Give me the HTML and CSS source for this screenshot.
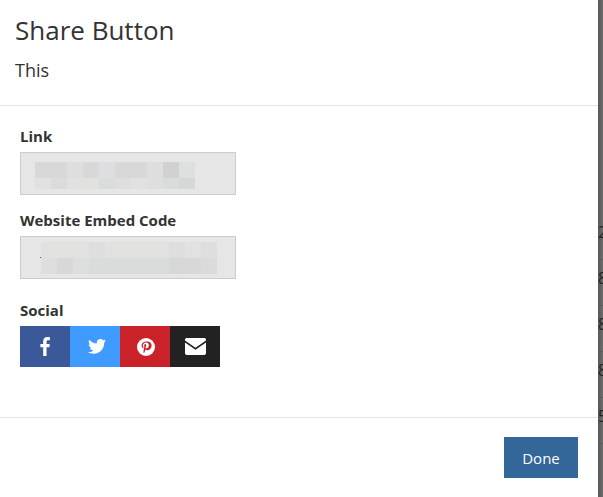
FILE: index.html
```html
<!DOCTYPE html>
<html lang="en">
<head>
<meta charset="utf-8">
<title>Share Button</title>
<link rel="stylesheet" href="styles.css">
</head>
<body>
<main class="modal">
  <header class="modal-header">
    <h1 class="modal-title">Share Button</h1>
    <p class="modal-sub">This</p>
  </header>
  <section class="modal-body">
    <div class="field">
      <label class="field-label">Link</label>
      <div class="blur-input blur-link">
        <i class="a"></i><i class="a"></i><i class="b"></i><i class="a"></i><i class="d"></i><i class="a"></i><i class="a"></i><i class="b"></i><i class="e"></i><i class="g"></i>
        <i class="f"></i><i class="h"></i><i class="f"></i><i class="f"></i><i class="h"></i><i class="b"></i><i class="f"></i><i class="b"></i><i class="h"></i><i class="c"></i>
      </div>
    </div>
    <div class="field">
      <label class="field-label">Website Embed Code</label>
      <div class="blur-input blur-embed">
        <span class="dot"></span>
        <i class="f"></i><i class="f"></i><i class="f"></i><i class="b"></i><i class="f"></i><i class="f"></i><i class="f"></i><i class="f"></i><i class="b"></i><i class="f"></i><i class="b"></i>
        <i class="b"></i><i class="a"></i><i class="d"></i><i class="h"></i><i class="h"></i><i class="h"></i><i class="h"></i><i class="h"></i><i class="c"></i><i class="a"></i><i class="h"></i>
      </div>
    </div>
    <div class="field social-field">
      <label class="field-label">Social</label>
      <div class="social">
        <a class="social-btn fb"><svg width="10" height="19" viewBox="0 0 11 21"><path fill="#fff" d="M7.2 21V11.400h3.100l.5-3.700H7.200V5.300c0-1.100.3-1.800 1.800-1.800h1.900V.2C10.600.1 9.500 0 8.200 0 5.400 0 3.500 1.700 3.500 4.800v2.900H.4v3.700h3.100V21z"/></svg></a>
        <a class="social-btn tw"><svg width="18" height="15" viewBox="0 0 24 20"><path fill="#fff" d="M24 2.400c-.9.400-1.800.700-2.800.800 1-.6 1.800-1.600 2.200-2.700-1 .6-2 1-3.100 1.200C19.300.7 18 0 16.600 0c-2.700 0-4.900 2.200-4.900 4.900 0 .4 0 .8.100 1.100C7.700 5.800 4.100 3.900 1.700.9c-.4.700-.7 1.600-.7 2.500 0 1.700.9 3.200 2.200 4.100-.8 0-1.600-.2-2.200-.6v.1c0 2.400 1.700 4.400 3.900 4.800-.4.100-.8.200-1.300.2-.3 0-.6 0-.9-.1.600 2 2.400 3.400 4.600 3.400-1.700 1.300-3.800 2.100-6.100 2.100-.4 0-.8 0-1.200-.1C2.200 18.700 4.800 19.500 7.500 19.500c9.100 0 14-7.500 14-14v-.6c1-.7 1.800-1.600 2.500-2.500z"/></svg></a>
        <a class="social-btn pi"><svg width="18" height="18" viewBox="0 0 18 18"><circle cx="9" cy="9" r="9" fill="#fff"/><path fill="#c92228" d="M9.200 3.500c-3 0-4.600 2-4.600 4.100 0 1 .5 2.300 1.400 2.700.2.100.2 0 .3-.2l.2-.7c0-.1 0-.2-.1-.3-.3-.4-.5-.9-.5-1.500 0-1.600 1.200-3 3.100-3 1.700 0 2.800 1.100 2.800 2.700 0 1.800-.9 3.100-2.100 3.100-.7 0-1.100-.5-1-1.200.2-.8.500-1.600.5-2.200 0-.5-.3-.9-.8-.9-.7 0-1.200.7-1.200 1.600 0 .6.200 1 .2 1l-.8 3.400c-.2.800 0 2 0 2.900l.7-.3c.2-.4.600-1.400.9-2.200l.3-1.300c.3.500 1.100 1 1.900 1 2.500 0 4.200-2.200 4.200-5 0-2.200-1.900-3.700-4.400-3.700z"/></svg></a>
        <a class="social-btn em"><svg width="21" height="17" viewBox="0 0 20 16"><path fill="#fff" d="M1.500 0h17C19.300 0 20 .7 20 1.500v.8l-10 6.900L0 2.300v-.8C0 .7.700 0 1.500 0z"/><path fill="#fff" d="M0 4.200l10 6.900 10-6.900v10.300c0 .8-.7 1.500-1.500 1.500h-17C.7 16 0 15.300 0 14.500z"/></svg></a>
      </div>
    </div>
  </section>
  <footer class="modal-footer">
    <button class="done-btn">Done</button>
  </footer>
</main>
<aside class="backdrop">
  <div class="bd-row">2</div>
  <div class="bd-row">8</div>
  <div class="bd-row">8</div>
  <div class="bd-row">8</div>
  <div class="bd-row">5</div>
</aside>
</body>
</html>
```
FILE: styles.css
```css
* { box-sizing: border-box; }
html, body { margin: 0; height: 100%; overflow: hidden; }
body {
  display: flex;
  width: 603px;
  height: 497px;
  font-family: "Open Sans", "Liberation Sans", sans-serif;
  color: #333;
  background: #666;
}
.modal {
  flex: 0 0 598px;
  background: #fff;
  display: flex;
  flex-direction: column;
}
.modal-header {
  height: 106px;
  padding: 12px 15px 0;
  border-bottom: 1px solid #e5e5e5;
}
.modal-title {
  margin: 0;
  font-size: 26px;
  font-weight: 400;
  line-height: 36px;
}
.modal-sub {
  margin: 10px 0 0;
  font-size: 18px;
  line-height: 25px;
}
.modal-body {
  height: 311px;
  padding: 20px 20px 0;
}
.field { margin-bottom: 15px; }
.field-label {
  display: block;
  font-size: 15px;
  font-weight: 700;
  line-height: 21px;
  margin-bottom: 5px;
}
.blur-input {
  position: relative;
  width: 216px;
  height: 43px;
  background: #e6e6e6;
  border: 1px solid #ccc;
  display: grid;
}
.blur-input i { display: block; }
.blur-link {
  grid-template-columns: repeat(10, 16px);
  grid-template-rows: 16px 11px;
  padding: 9px 0 0 14px;
}
.blur-embed {
  grid-template-columns: repeat(11, 16px);
  grid-template-rows: 16px 16px;
  padding: 5px 0 0 20px;
}
.dot {
  position: absolute;
  left: 19px;
  top: 20px;
  width: 1px;
  height: 1px;
  background: #555;
}
.a { background: #d8d8d8; }
.b { background: #dedede; }
.c { background: #d6d8d8; }
.d { background: #dcdee0; }
.e { background: #d0d2d0; }
.f { background: #e1e1df; }
.g { background: #dde0e0; }
.h { background: #dadcdb; }
.social-field { margin-top: 21px; }
.social { display: flex; }
.social-btn {
  width: 50px;
  height: 41px;
  display: flex;
  align-items: center;
  justify-content: center;
}
.fb { background: #3b5998; }
.tw { background: #3f9bff; padding-left: 4px; }
.pi { background: #c92228; padding-left: 2px; }
.em { background: #222; padding-left: 1px; }
.modal-footer {
  flex: 1;
  border-top: 1px solid #e5e5e5;
  padding: 19px 20px 0 0;
  display: flex;
  justify-content: flex-end;
  align-items: flex-start;
}
.done-btn {
  width: 74px;
  height: 41px;
  border: 0;
  background: #336699;
  color: #fff;
  font: 400 15px "Open Sans", "Liberation Sans", sans-serif;
}
.backdrop {
  flex: 1;
  overflow: hidden;
  padding-top: 214px;
  font-size: 16px;
  color: #222;
  background: linear-gradient(90deg, #555, #6e6e6e);
}
.bd-row {
  height: 46px;
  line-height: 37px;
  border-bottom: 1px solid #5c5c5c;
}
```
